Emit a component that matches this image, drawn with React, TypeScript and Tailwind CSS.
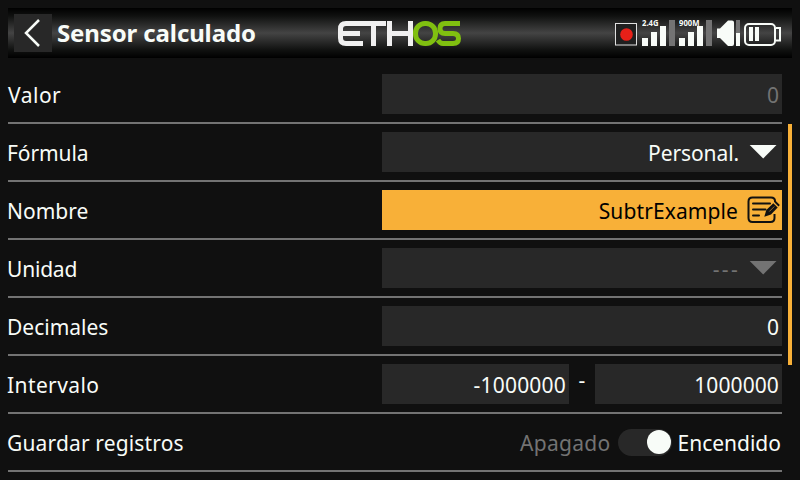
import type { ReactNode } from "react";

const Row = ({ label, children }: { label: ReactNode; children: ReactNode }) => (
  <div className="flex h-[58px] items-start justify-between border-b-2 border-[#737373] pt-2">
    <div className="flex h-10 items-center pt-[3px]">{label}</div>
    {children}
  </div>
);

const Field = ({ children, className = "w-[400px] bg-[#282828]" }: { children: ReactNode; className?: string }) => (
  <div className={`flex h-10 items-center justify-end ${className}`}>{children}</div>
);

const Arrow = ({ color }: { color: string }) => (
  <svg className="ml-[11px] mr-[5px] h-10 w-7" viewBox="0 0 28 40">
    <path d="M0.700 13H27.500L14.200 26.500Z" fill={color} />
  </svg>
);

const EditIcon = () => (
  <svg className="ml-2 h-10 w-9" viewBox="746 190 36 40" fill="none" stroke="#111" strokeWidth="2">
    <path d="M775 202V201Q775 197.500 771 197.500H752.500Q748.500 197.500 748.500 201.500V218Q748.500 222 752.500 222H770.500Q774.500 222 774.500 218V214" />
    <path d="M753 203.500H770M753 209.500H765.500M753 215.500H759" strokeLinecap="round" />
    <path d="M764.300 216.800L766.300 210L773.300 203.200L777.700 207.500L771 214.500Z" fill="#111" stroke="none" />
    <path d="M774.300 202.200L775.800 200.900L779.800 205L778.500 206.500Z" fill="#111" stroke="none" />
    <path d="M769.300 211.500L774.300 206.500" stroke="#f8b038" strokeWidth="0.600" />
  </svg>
);

const Logo = () => (
  <svg className="h-[50px] w-[124px]" viewBox="338 8 124 50" fill="none" strokeWidth="5">
    <g stroke="#f0f0f0">
      <path d="M363 43.500H346Q340.500 43.500 340.500 38V29Q340.500 23.500 346 23.500H386M341 33.500H360M373.500 23V46" />
      <path d="M389.500 21V46M410.500 21V46M389 33.500H411" />
    </g>
    <g stroke="#80c010">
      <rect x="415.500" y="23.500" width="20" height="20" rx="9.500" />
      <path d="M460 23.500H445Q440 23.500 440 28.500Q440 33.500 445 33.500H453Q458.500 33.500 458.500 38.500Q458.500 43.500 453 43.500H443Q440 43.500 438 40" />
    </g>
  </svg>
);

const Signal = ({ label, labelWidth }: { label: string; labelWidth: number }) => (
  <svg className="h-[50px] w-[37px]" viewBox="0 8 37 50" fill="#f8fcf8">
    <path d="M0 38h6v8H0zM9 32h6v14H9zM18 26h6v20H18z" />
    <path d="M27 20h6v26H27z" fill="#737373" />
    <text x="0" y="26" fontSize="8" fontWeight="700" textLength={labelWidth} lengthAdjust="spacingAndGlyphs" fontFamily="Noto Sans, sans-serif">{label}</text>
  </svg>
);

const StatusIcons = () => (
  <div className="flex">
    <svg className="mr-1 h-[50px] w-6" viewBox="614 8 24 50">
      <rect x="615.500" y="23.500" width="21" height="21.500" fill="#202020" stroke="#e0e0e0" />
      <circle cx="626.500" cy="34.500" r="6.300" fill="#e82018" />
    </svg>
    <Signal label="2.4G" labelWidth={16.5} />
    <Signal label="900M" labelWidth={20.5} />
    <svg className="h-[50px] w-[27px]" viewBox="716 8 27 50" fill="#f8fcf8">
      <path d="M717 28.500H720L728 20.500H732Q734 20.500 734 22.500V44Q734 46 732 46H728L720 38H717Z" />
      <path d="M736 33h4v13h-4z" />
      <path d="M736 20h4v13h-4z" fill="#737373" />
    </svg>
    <svg className="h-[50px] w-[39px]" viewBox="743 8 39 50" fill="none" stroke="#f8fcf8" strokeWidth="2">
      <rect x="745" y="24" width="30" height="21" rx="4" />
      <path d="M776 28H780V40.500H776" />
      <path d="M749 27h4v14h-4zM755 27h4v14h-4z" fill="#f8fcf8" stroke="none" />
    </svg>
  </div>
);

export default function App() {
  return (
    <div className="h-[480px] w-[800px] overflow-hidden bg-[#101010] px-2 pt-2 font-['Noto_Sans',sans-serif] text-[21px] leading-none whitespace-nowrap text-[#f8fcf8]">
      <header className="flex h-[50px] items-center justify-between bg-[linear-gradient(#000_0%,#101110_16%,#444_50%,#101110_84%,#000_100%)]">
        <div className="flex w-[330px] items-center">
          <div className="ml-1.5 flex size-[38px] items-center justify-center bg-[#282828]">
            <svg className="size-[38px]" viewBox="0 0 38 38" fill="none" stroke="#f8fcf8" strokeWidth="2.500">
              <path d="M25 6L12 19L25 32" />
            </svg>
          </div>
          <h1 className="ml-[5px] text-2xl leading-none font-bold tracking-[-0.120px]">Sensor calculado</h1>
        </div>
        <Logo />
        <div className="flex w-[330px] justify-end pr-2.5"><StatusIcons /></div>
      </header>
      <div className="mt-2 flex gap-1.5">
        <main className="w-[774px]">
          <Row label={<span className="tracking-[0.5px]">Valor</span>}>
            <Field><span className="pt-[3px] pr-[3px] text-[#737373]">0</span></Field>
          </Row>
          <Row label={<span className="-ml-px tracking-[-0.1px]">Fórmula</span>}>
            <Field><span className="-mr-px pt-[3px] tracking-[-0.1px]">Personal.</span><Arrow color="#f8fcf8" /></Field>
          </Row>
          <Row label={<span className="-ml-px">Nombre</span>}>
            <Field className="w-[400px] bg-[#f8b038] text-black"><span className="pt-[3px] tracking-[0.1px]">SubtrExample</span><EditIcon /></Field>
          </Row>
          <Row label={<span className="-ml-px tracking-[-0.2px]">Unidad</span>}>
            <Field><span className="-mr-0.5 pt-[3px] tracking-[2.3px] text-[#737373]">---</span><Arrow color="#737373" /></Field>
          </Row>
          <Row label={<span className="-ml-px">Decimales</span>}>
            <Field><span className="pt-[3px] pr-[3px]">0</span></Field>
          </Row>
          <Row label={<span className="-ml-px tracking-[0.4px]">Intervalo</span>}>
            <div className="flex w-[400px] justify-between">
              <Field className="w-[187px] bg-[#282828]"><span className="pt-[3px] pr-[3px] tracking-[0.2px]">-1000000</span></Field>
              <span className="pt-1.5">-</span>
              <Field className="w-[187px] bg-[#282828]"><span className="pt-[3px] pr-[3px] tracking-[0.1px]">1000000</span></Field>
            </div>
          </Row>
          <Row label={<span className="-ml-px tracking-[0.15px]">Guardar registros</span>}>
            <div className="flex h-10 items-center">
              <span className="pt-[3px] tracking-[0.3px] text-[#737373]">Apagado</span>
              <span className="ml-2 mr-[5px] flex h-[27px] w-[54px] items-center justify-end rounded-full bg-[#282828] pr-px">
                <span className="size-6 rounded-full bg-[#f8fcf8]" />
              </span>
              <span className="pt-[3px] pr-px">Encendido</span>
            </div>
          </Row>
        </main>
        <div className="mt-[58px] h-[241px] w-1 bg-[#f8b038]" />
      </div>
    </div>
  );
}
